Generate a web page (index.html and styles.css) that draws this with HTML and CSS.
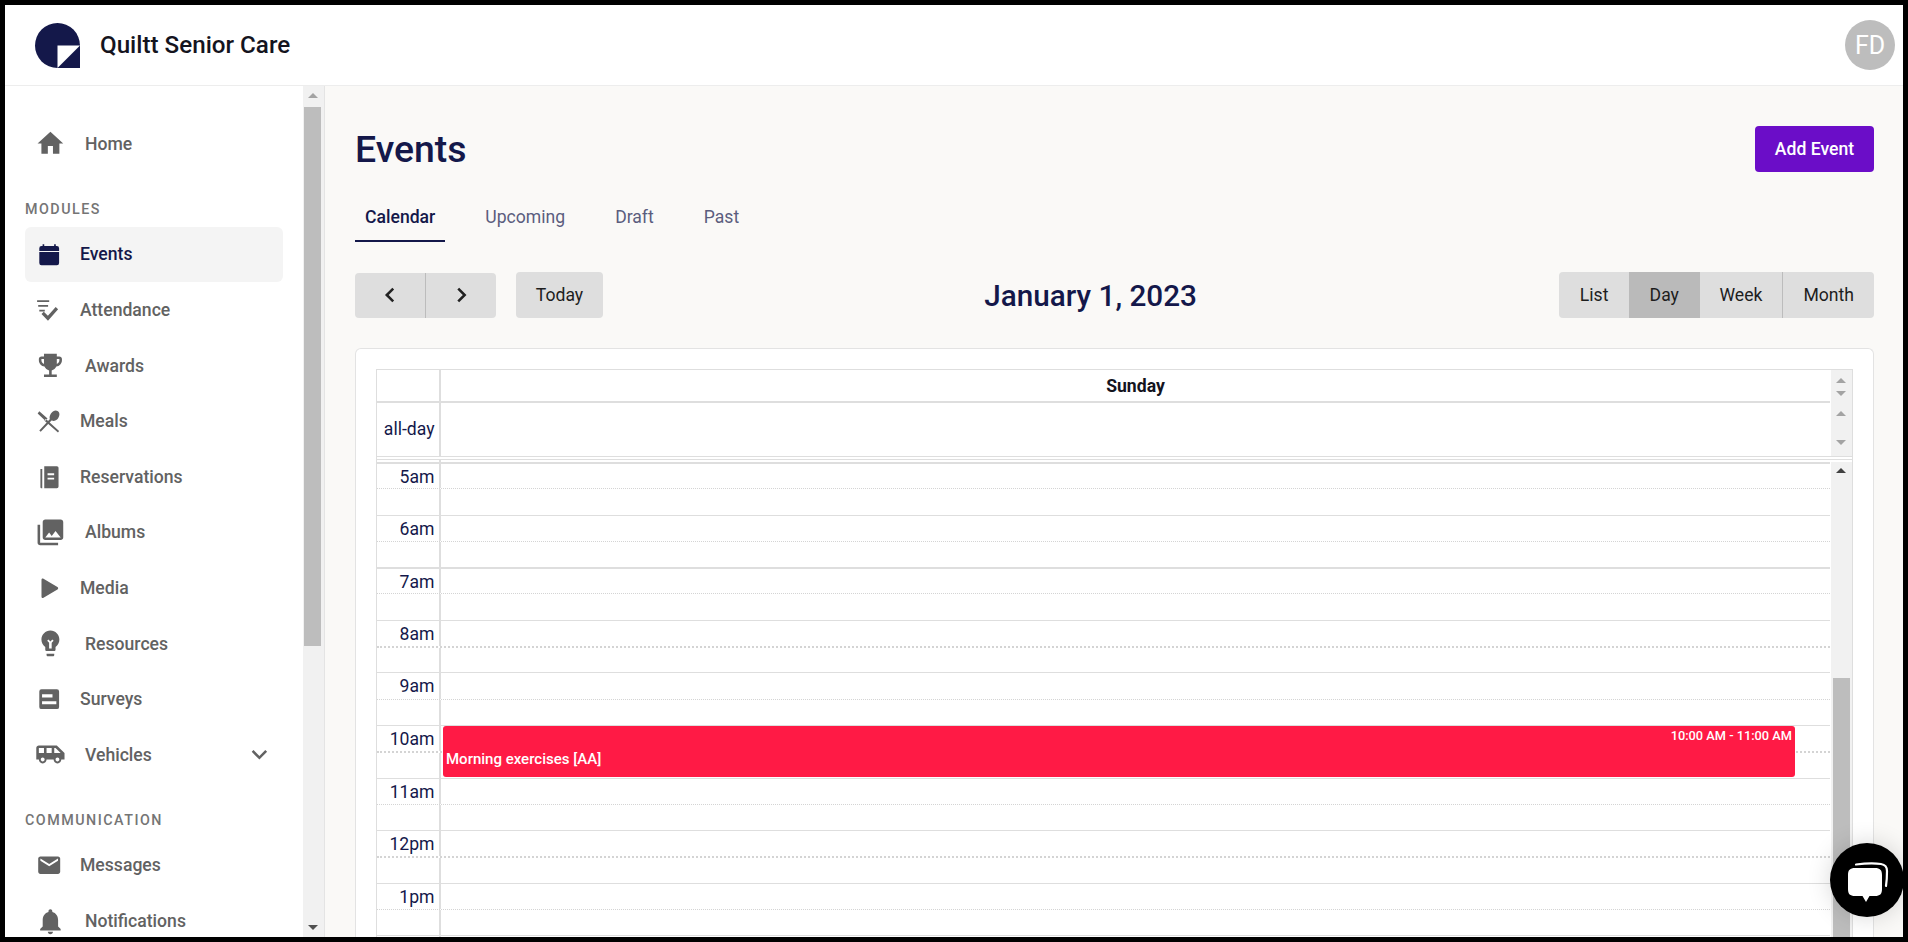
FILE: index.html
```html
<!DOCTYPE html>
<html lang="en">
<head>
<meta charset="utf-8">
<title>Quiltt Senior Care - Events</title>
<link rel="stylesheet" href="styles.css">
</head>
<body>
<div class="app">
  <header class="topbar">
    <svg class="logo" viewBox="0 0 45 45"><path class="logo-ink" d="M45 22.500A22.500 22.500 0 1 0 22.500 45H45z"/><path class="logo-paper" d="M22.500 22.500H45L22.500 45z"/></svg>
    <span class="brand">Quiltt Senior Care</span>
    <span class="avatar">FD</span>
  </header>
  <div class="workspace">
    <aside class="sidebar">
      <nav class="nav">
        <a class="item wide"><svg class="ico" viewBox="0 0 24 24"><path d="M10 20v-6h4v6h5v-8h3L12 3 2 12h3v8z"/></svg>Home</a>
        <div class="label">MODULES</div>
        <a class="item active"><svg class="ico" viewBox="0 0 24 24"><path d="M6 3h1.500v1.500h9V3H18v1.500h1a2 2 0 0 1 2 2V20a2 2 0 0 1-2 2H5a2 2 0 0 1-2-2V6.500a2 2 0 0 1 2-2h1zM3 9.200v.8h18v-.8z" fill-rule="evenodd"/></svg>Events</a>
        <a class="item"><svg class="ico" viewBox="0 0 24 24"><path d="M1 3h11v1.600H1zM2 7.300h9v1.600H2zM3 11.600h5v1.600H3zM5 15.500l2.100-2.100 3.700 3.700 7.100-8 2.200 2-9.200 10.400z"/></svg>Attendance</a>
        <a class="item wide"><svg class="ico" viewBox="0 0 24 24"><path d="M19 5h-2V3H7v2H5c-1.100 0-2 .9-2 2v1c0 2.550 1.920 4.630 4.390 4.940.63 1.500 1.980 2.630 3.610 2.960V19H7v2h10v-2h-4v-3.100c1.630-.33 2.980-1.460 3.610-2.960C19.080 12.630 21 10.550 21 8V7c0-1.100-.9-2-2-2zM5 8V7h2v3.820C5.840 10.400 5 9.300 5 8zm14 0c0 1.300-.84 2.400-2 2.820V7h2v1z"/></svg>Awards</a>
        <a class="item"><svg class="ico" viewBox="0 0 24 24"><path d="M3 3 1.500 5l7 6.500 2-2zM9 10 21 21l-1 1.200L7.500 11.300zM13.500 9 15 10.500 4.300 21.700 3 20.500zM14 4.500c1.500-2 4-3 6-1.500s1.500 4.500 0 6.500-4.500 3-6.500 1.500-1-4.500.5-6.500z"/></svg>Meals</a>
        <a class="item"><svg class="ico" viewBox="0 0 24 24"><path d="M4 4.500h1.700V22H4.900A.9.900 0 0 1 4 21.100zM7.500 2H19a1.500 1.500 0 0 1 1.500 1.500v17A1.500 1.500 0 0 1 19 22H7.500zM10.500 8.500v1.700h6V8.500zM10.500 12.500v1.700h6v-1.700z" fill-rule="evenodd"/></svg>Reservations</a>
        <a class="item wide"><svg class="ico" viewBox="0 0 24 24"><path d="M22 16V4c0-1.100-.9-2-2-2H8c-1.100 0-2 .9-2 2v12c0 1.100.9 2 2 2h12c1.100 0 2-.9 2-2zm-11-4l2.030 2.710L16 11l4 5H8l3-4zM2 6v14c0 1.100.9 2 2 2h14v-2H4V6H2z"/></svg>Albums</a>
        <a class="item"><svg class="ico" viewBox="0 0 24 24"><path d="M5 4.300c0-1 1-1.500 1.800-1L19.500 10.800c.9.500.9 1.800 0 2.400L6.800 20.700c-.8.500-1.800 0-1.800-1z"/></svg>Media</a>
        <a class="item wide"><svg class="ico" viewBox="0 0 24 24"><path d="M9 21c0 .55.45 1 1 1h4c.55 0 1-.45 1-1v-1H9v1zm3-19C8.140 2 5 5.140 5 9c0 2.380 1.190 4.470 3 5.740V17c0 .55.45 1 1 1h6c.55 0 1-.45 1-1v-2.260c1.810-1.270 3-3.360 3-5.740 0-3.860-3.140-7-7-7zM11 16v-4.500L9.500 10l1-1 1.500 1.500L13.500 9l1 1L13 11.500V16z" fill-rule="evenodd"/></svg>Resources</a>
        <a class="item"><svg class="ico" viewBox="0 0 24 24"><path d="M5 3h14a2 2 0 0 1 2 2v14a2 2 0 0 1-2 2H5a2 2 0 0 1-2-2V5a2 2 0 0 1 2-2zM5.500 7.500v2.900h9.500V7.500zM5.500 13.800v2.900h13v-2.900z" fill-rule="evenodd"/></svg>Surveys</a>
        <a class="item wide"><svg class="ico" viewBox="0 0 24 24"><path d="M17 5H3c-1.100 0-2 .89-2 2v9h2c0 1.650 1.340 3 3 3s3-1.350 3-3h5.500c0 1.650 1.340 3 3 3s3-1.350 3-3H23v-5l-6-6zM3 11V7h4v4H3zm3 6.500c-.83 0-1.500-.67-1.500-1.500s.67-1.500 1.500-1.500 1.500.67 1.500 1.500-.67 1.500-1.500 1.500zm7-6.500H9V7h4v4zm4.500 6.500c-.83 0-1.500-.67-1.500-1.500s.67-1.500 1.500-1.500 1.500.67 1.500 1.500-.67 1.500-1.500 1.500zM15 11V7h1l4 4h-5z"/></svg>Vehicles<svg class="ico caret" viewBox="0 0 24 24"><path d="M16.590 8.590L12 13.170 7.410 8.590 6 10l6 6 6-6z"/></svg></a>
        <div class="label">COMMUNICATION</div>
        <a class="item"><svg class="ico" viewBox="0 0 24 24"><path d="M20 4H4c-1.100 0-1.990.9-1.990 2L2 18c0 1.100.9 2 2 2h16c1.100 0 2-.9 2-2V6c0-1.100-.9-2-2-2zm0 4l-8 5-8-5V6l8 5 8-5v2z"/></svg>Messages</a>
        <a class="item wide"><svg class="ico" viewBox="0 0 24 24"><path d="M12 22c1.100 0 2-.9 2-2h-4c0 1.100.89 2 2 2zm6-6v-5c0-3.070-1.640-5.640-4.500-6.320V4c0-.83-.67-1.500-1.500-1.500s-1.500.67-1.500 1.500v.68C7.630 5.360 6 7.920 6 11v5l-2 2v1h16v-1l-2-2z"/></svg>Notifications</a>
      </nav>
      <div class="rail">
        <i class="arrow up muted"></i>
        <i class="rail-thumb"></i>
        <i class="arrow down dark rail-end"></i>
      </div>
    </aside>
    <main class="main">
      <div class="page-head">
        <h1 class="page-title">Events</h1>
        <button class="add-btn">Add Event</button>
      </div>
      <div class="tabs">
        <a class="tab current">Calendar</a>
        <a class="tab">Upcoming</a>
        <a class="tab">Draft</a>
        <a class="tab">Past</a>
      </div>
      <div class="toolbar">
        <div class="tool-left">
          <div class="group">
            <button class="btn nav-btn sep"><svg class="chev" viewBox="0 0 24 24"><path d="M15.500 5l-7 7 7 7"/></svg></button>
            <button class="btn nav-btn"><svg class="chev" viewBox="0 0 24 24"><path d="M9 5l7 7-7 7"/></svg></button>
          </div>
          <button class="btn today">Today</button>
        </div>
        <h2 class="date">January 1, 2023</h2>
        <div class="group views">
          <button class="btn view roomy">List</button>
          <button class="btn view roomy on">Day</button>
          <button class="btn view sep">Week</button>
          <button class="btn view">Month</button>
        </div>
      </div>
      <section class="card">
        <div class="cal">
          <div class="cal-top">
            <div class="cal-top-rows">
              <div class="cal-row head-row"><div class="axis"></div><div class="day-name">Sunday</div></div>
              <div class="cal-row allday-row"><div class="axis">all-day</div><div class="lane"></div></div>
            </div>
            <div class="mini-rail">
              <div class="mini head-mini"><i class="arrow up muted"></i><i class="arrow down muted"></i></div>
              <div class="mini day-mini"><i class="arrow up muted"></i><i class="arrow down muted"></i></div>
            </div>
          </div>
          <div class="divider"></div>
          <div class="stub"><i></i></div>
          <div class="cal-body">
            <div class="grid">
              <div class="slot hour thick"><div class="axis">5am</div><div class="lane"></div></div>
              <div class="slot half"><div class="axis"></div><div class="lane"></div></div>
              <div class="slot hour"><div class="axis">6am</div><div class="lane"></div></div>
              <div class="slot half"><div class="axis"></div><div class="lane"></div></div>
              <div class="slot hour thick"><div class="axis">7am</div><div class="lane"></div></div>
              <div class="slot half"><div class="axis"></div><div class="lane"></div></div>
              <div class="slot hour"><div class="axis">8am</div><div class="lane"></div></div>
              <div class="slot half thick"><div class="axis"></div><div class="lane"></div></div>
              <div class="slot hour"><div class="axis">9am</div><div class="lane"></div></div>
              <div class="slot half"><div class="axis"></div><div class="lane"></div></div>
              <div class="slot hour"><div class="axis">10am</div><div class="lane"></div></div>
              <div class="slot half thick"><div class="axis"></div><div class="lane"></div></div>
              <div class="slot hour"><div class="axis">11am</div><div class="lane"></div></div>
              <div class="slot half"><div class="axis"></div><div class="lane"></div></div>
              <div class="slot hour"><div class="axis">12pm</div><div class="lane"></div></div>
              <div class="slot half thick"><div class="axis"></div><div class="lane"></div></div>
              <div class="slot hour"><div class="axis">1pm</div><div class="lane"></div></div>
              <div class="slot half"><div class="axis"></div><div class="lane"></div></div>
              <div class="slot hour"><div class="axis"></div><div class="lane"></div></div>
              <div class="event">
                <div class="event-time">10:00 AM - 11:00 AM</div>
                <div class="event-title">Morning exercises [AA]</div>
              </div>
            </div>
            <div class="grid-rail">
              <i class="arrow up dark"></i>
              <i class="grid-thumb"></i>
            </div>
          </div>
        </div>
      </section>
    </main>
  </div>
</div>
<button class="chat" aria-label="Chat">
  <svg viewBox="0 0 74 74"><path class="chat-back" d="M26 21.500c8-1 18-1.500 25-.5 4 .6 6 3 6 7 0 5-.2 10-1 15"/><path class="chat-front" d="M25 25h20c5 0 7 2 7 7v14c0 5-2 7-7 7H39.500L36 59l-3.500-6H25c-5 0-7-2-7-7V32c0-5 2-7 7-7z"/></svg>
</button>
</body>
</html>
```

FILE: styles.css
```css
* { box-sizing: border-box; }
html, body { margin: 0; height: 100%; overflow: hidden; }
body {
  font-family: Roboto, "Liberation Sans", sans-serif;
  color: #14184a;
  background: #000;
}
.app {
  height: 942px;
  border: 5px solid #000;
  display: flex;
  flex-direction: column;
  background: #fff;
}
.topbar {
  height: 81px;
  flex: none;
  display: flex;
  align-items: center;
  padding: 0 8px 0 30px;
  background: #fff;
  border-bottom: 1px solid #ededed;
}
.logo { width: 45px; height: 45px; flex: none; }
.logo-ink { fill: #14184a; }
.logo-paper { fill: #fff; }
.brand {
  margin-left: 20px;
  font-size: 24.200px;
  font-weight: 500;
  color: #14141e;
}
.avatar {
  margin-left: auto;
  width: 50px;
  height: 50px;
  border-radius: 50%;
  background: #bdbdbd;
  color: #fff;
  font-size: 25px;
  display: flex;
  align-items: center;
  justify-content: center;
}
.workspace { flex: 1; min-height: 0; display: flex; }

.sidebar { width: 320px; flex: none; display: flex; background: #fff; }
.nav { width: 298px; flex: none; padding: 30px 0 0 20px; overflow: hidden; }
.item {
  width: 258px;
  height: 55.6px;
  display: flex;
  align-items: center;
  padding: 0 11px;
  border-radius: 6px;
  font-size: 17.6px;
  font-weight: 500;
  color: #626262;
}
.ico { width: 26.4px; height: 26.4px; flex: none; fill: currentColor; margin-right: 17.6px; }
.wide .ico { width: 30.8px; height: 30.8px; margin: 0 19.6px 0 -1.400px; }
.wide .caret { margin: 0 -3px 0 auto; }
.item.active { background: #f4f4f4; color: #14184a; }
.label {
  height: 55px;
  padding-top: 27px;
  line-height: 20px;
  font-size: 14.300px;
  font-weight: 500;
  letter-spacing: 1.500px;
  color: #757575;
}
.rail {
  width: 22px;
  flex: none;
  display: flex;
  flex-direction: column;
  align-items: center;
  background: #f1f1f1;
  border-right: 1px solid #e4e4e4;
  padding: 7px 2px 7px 0;
}
.rail-thumb { width: 17px; height: 539px; margin-top: 9px; background: #bdbdbd; }
.rail-end { margin-top: auto; }
.arrow { display: block; width: 0; height: 0; border-left: 5px solid transparent; border-right: 5px solid transparent; }
.arrow.up { border-bottom: 5px solid; }
.arrow.down { border-top: 5px solid; }
.muted { color: #a3a3a3; }
.dark { color: #505050; }

.main {
  flex: 1;
  min-width: 0;
  display: flex;
  flex-direction: column;
  padding: 40px 29px 0 30px;
  background: #faf9f7;
  overflow: hidden;
}
.page-head { height: 46px; flex: none; display: flex; align-items: center; justify-content: space-between; }
.page-title { margin: 0; font-size: 37.400px; font-weight: 500; color: #14184a; }
.add-btn {
  width: 119px;
  height: 46px;
  border: 0;
  border-radius: 4px;
  background: #6b0dc8;
  color: #fff;
  font: 500 17.6px Roboto, sans-serif;
}
.tabs { height: 70px; flex: none; display: flex; align-items: flex-end; gap: 30px; }
.tab {
  height: 50px;
  padding: 2px 10px 0;
  display: flex;
  align-items: center;
  font-size: 17.6px;
  color: #5b5d7e;
  border-bottom: 2px solid transparent;
}
.tab.current { color: #14184a; font-weight: 500; border-bottom-color: #14184a; }
.toolbar {
  height: 46px;
  margin-top: 30px;
  flex: none;
  display: flex;
  align-items: center;
  justify-content: space-between;
}
.tool-left { display: flex; align-items: center; gap: 20px; width: 267px; }
.group { display: flex; border-radius: 4px; overflow: hidden; height: 45px; }
.views { height: 46px; }
.btn {
  border: 0;
  background: #dedede;
  color: #1d1d1d;
  font: 400 17.6px Roboto, sans-serif;
  padding: 0;
}
.nav-btn { width: 70.500px; display: flex; align-items: center; justify-content: center; flex: none; }
.sep { border-right: 1px solid #bcbcbc; }
.chev { width: 22px; height: 22px; fill: none; stroke: #222; stroke-width: 2.800; }
.today { width: 87px; height: 46px; border-radius: 4px; flex: none; }
.date { margin: 0; font-size: 29.700px; font-weight: 500; color: #14184a; }
.view { padding: 0 20px; }
.view.roomy { padding: 0 20.600px; }
.view.on { background: #bababa; }

.card {
  flex: 1;
  min-height: 0;
  margin-top: 30px;
  padding: 20px 20px 0;
  background: #fff;
  border: 1px solid #e3e3e3;
  border-bottom: 0;
  border-radius: 6px 6px 0 0;
  overflow: hidden;
}
.cal {
  height: 100%;
  display: flex;
  flex-direction: column;
  border: 1px solid #dedede;
  border-bottom: 0;
}
.cal-top { display: flex; flex: none; height: 86px; }
.cal-top-rows { flex: 1; min-width: 0; }
.cal-row { display: flex; }
.head-row { height: 33px; border-bottom: 2px solid #dedede; }
.allday-row { height: 53px; }
.axis {
  width: 64px;
  flex: none;
  border-right: 2px solid #dedede;
  padding-right: 4.500px;
  text-align: right;
  font-size: 17.6px;
  color: #14184a;
}
.allday-row .axis { line-height: 53px; }
.day-name { flex: 1; text-align: center; font-size: 17.6px; font-weight: 700; line-height: 32px; color: #14141e; }
.lane { flex: 1; }
.mini-rail { width: 22px; flex: none; background: #f1f1f1; border-left: 1px solid #fff; }
.mini { display: flex; flex-direction: column; align-items: center; padding-right: 1px; }
.head-mini { height: 32px; padding-top: 8px; gap: 8px; }
.day-mini { height: 54px; padding-top: 9px; gap: 24px; }
.divider { height: 4px; flex: none; border-top: 1px solid #dedede; border-bottom: 1px solid #dedede; }
.stub { height: 2px; flex: none; }
.stub i { display: block; width: 64px; height: 2px; border-right: 2px solid #dedede; }
.cal-body { flex: 1; min-height: 0; display: flex; overflow: hidden; }
.grid { flex: 1; min-width: 0; position: relative; }
.slot { height: 26.300px; display: flex; border-top: 1px solid #dedede; }
.slot.half { border-top: 1px dotted #d4d4d4; }
.slot.thick { border-top-width: 2px; }
.hour .axis { line-height: 27px; }
.event {
  position: absolute;
  left: 66px;
  top: 264px;
  width: 1352px;
  height: 51px;
  padding: 2px 3px 2px 3px;
  background: #ff1a45;
  border-radius: 3px;
  color: #fff;
  font-size: 12.800px;
  font-weight: 500;
}
.event-time { text-align: right; line-height: 16px; }
.event-title { margin-top: 5px; line-height: 20px; font-size: 15px; }
.grid-rail {
  width: 22px;
  flex: none;
  display: flex;
  flex-direction: column;
  align-items: center;
  background: #f1f1f1;
  border-left: 1px solid #fff;
  padding: 6px 1px 0 0;
}
.grid-thumb { width: 17px; flex: 1; margin-top: 205px; background: #bdbdbd; }
.grid-rail .arrow { color: #404040; }

.chat {
  position: fixed;
  left: 1830px;
  top: 843px;
  width: 74px;
  height: 74px;
  padding: 0;
  border: 0;
  border-radius: 50%;
  background: #000;
  box-shadow: 0 0 24px rgba(0, 0, 0, .16);
}
.chat svg { display: block; width: 74px; height: 74px; }
.chat-back { fill: none; stroke: #fff; stroke-width: 2.200; stroke-linecap: round; }
.chat-front { fill: #fff; }
```
